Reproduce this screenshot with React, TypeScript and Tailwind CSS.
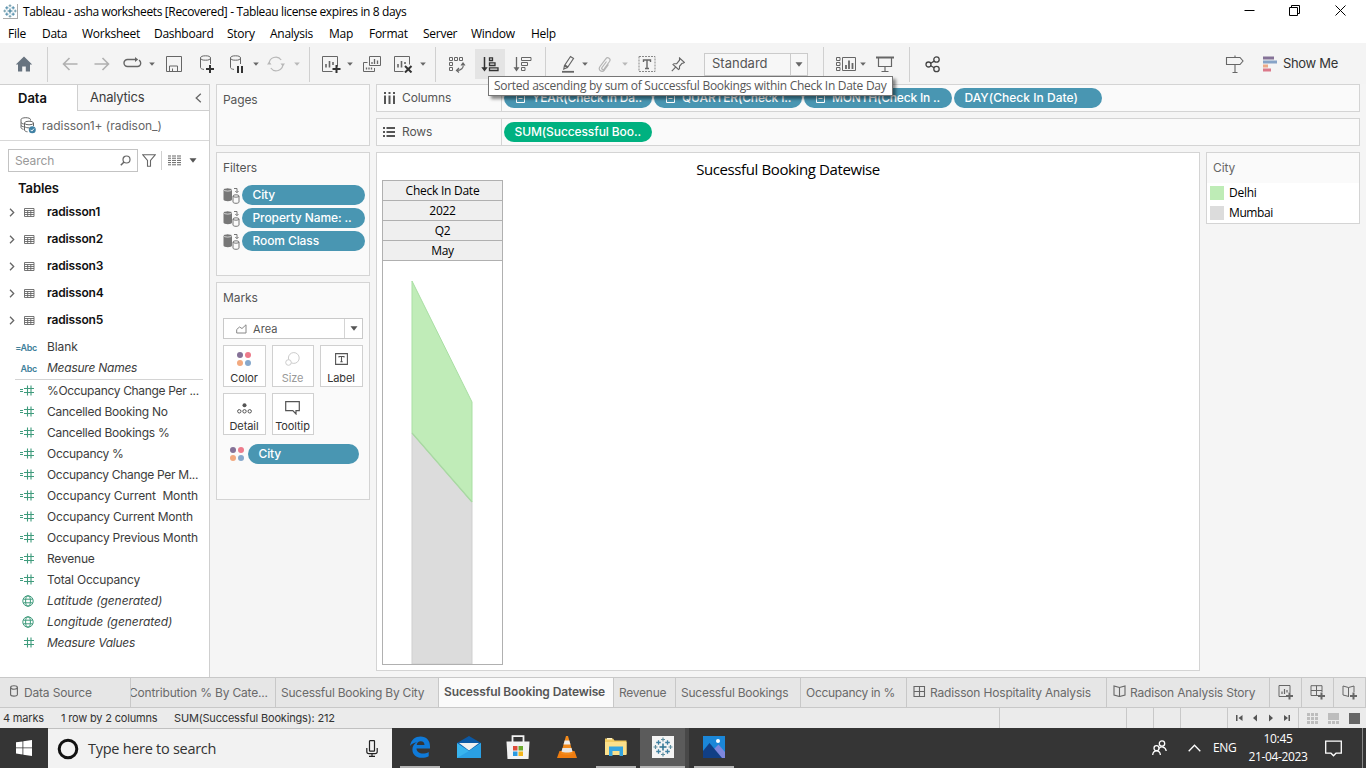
import React from "react";

const ui = "font-['Inter','Noto_Sans',sans-serif]";
const win = "font-['Open_Sans','Noto_Sans',sans-serif]";

type P = { children?: React.ReactNode; className?: string };

function Svg({ w, h, children, className = "", stroke = "#666", sw = 1 }: P & { w: number; h: number; stroke?: string; sw?: number }) {
  return (
    <svg width={w} height={h} viewBox={`0 0 ${w} ${h}`} fill="none" stroke={stroke} strokeWidth={sw} className={`block shrink-0 ${className}`}>
      {children}
    </svg>
  );
}

function Slot({ className = "", children }: P) {
  return <div className={`flex shrink-0 items-center justify-center ${className}`}>{children}</div>;
}

function Caret({ className = "", color = "#666" }: { className?: string; color?: string }) {
  return (
    <Svg w={6} h={4} stroke="none" className={className}>
      <path d="M0.2 0.5h5.6L3 3.7z" fill={color} />
    </Svg>
  );
}

function Sep({ className = "" }: { className?: string }) {
  return <div className={`h-[35px] w-px shrink-0 bg-[#d0d0d0] ${className}`} />;
}

function TableauMark({ size, className = "" }: { size: number; className?: string }) {
  return (
    <svg width={size} height={size} viewBox="0 0 20 20" fill="none" className={`shrink-0 ${className}`}>
      <path d="M10 6.500v7M6.500 10h7" stroke="#2f7391" strokeWidth="1.500" />
      <path d="M5.500 3.200v4.600M3.200 5.500h4.600M14.500 3.200v4.600M12.200 5.500h4.600M5.500 12.200v4.600M3.200 14.500h4.600M14.500 12.200v4.600M12.200 14.500h4.600" stroke="#3f80a1" strokeWidth="1.300" />
      <path d="M10 .5v4M8 2.500h4M10 15.500v4M8 17.500h4M.5 10h4M2.500 8v4M15.500 10h4M17.500 8v4" stroke="#5f8fa0" strokeWidth="1.200" />
    </svg>
  );
}

function TitleBar() {
  return (
    <div className={`flex h-[23px] shrink-0 items-center bg-white ${win}`}>
      <div className="ml-[3px] flex size-[15px] items-center justify-center border-r border-b border-[#aaa]">
        <TableauMark size={14} />
      </div>
      <div className="ml-[5px] whitespace-pre text-[12px] tracking-[-0.37px] text-black">Tableau - asha worksheets [Recovered] - Tableau license expires in 8 days</div>
      <div className="ml-auto flex h-full items-center pb-[2px]">
        <Svg w={11} h={11} stroke="#000" className="mr-[34px]"><path d="M.5 5.5h10" /></Svg>
        <Svg w={11} h={11} stroke="#000" className="mr-[35px]"><path d="M.5 2.5h8v8h-8zM2.500 2.500V.5h8v8H8.500" /></Svg>
        <Svg w={11} h={11} stroke="#000" className="mr-[20px]"><path d="M.5.5l10 10M10.500.5l-10 10" /></Svg>
      </div>
    </div>
  );
}

function MenuBar() {
  const items: [string, string][] = [
    ["File", "w-[34px]"], ["Data", "w-[40px]"], ["Worksheet", "w-[72px]"], ["Dashboard", "w-[73px]"], ["Story", "w-[43px]"],
    ["Analysis", "w-[59px]"], ["Map", "w-[40px]"], ["Format", "w-[54px]"], ["Server", "w-[48px]"], ["Window", "w-[60px]"], ["Help", "w-[40px]"],
  ];
  return (
    <div className={`flex h-[20px] shrink-0 items-center bg-white pl-[8px] pt-[2px] text-[12px] tracking-[-0.27px] text-black ${win}`}>
      {items.map(([t, w]) => <div key={t} className={`shrink-0 leading-[18px] ${w}`}>{t}</div>)}
    </div>
  );
}

function Toolbar() {
  return (
    <div className="flex h-[41px] shrink-0 items-center bg-[#f4f4f4] pt-px">
      <Slot className="w-[47px]">
        <Svg w={18} h={16} stroke="none"><path d="M9 .6L.8 8.600H3V15.500H7.200V10.500H10.800V15.500H15V8.600H17.200z" fill="#67737f" /></Svg>
      </Slot>
      <Sep />
      <Slot className="ml-[7px] w-[30px]"><Svg w={16} h={14} stroke="#b0b0b0" sw={1.6}><path d="M15.500 7H1.500M7.500 1L1.500 7l6 6" /></Svg></Slot>
      <Slot className="ml-[2px] w-[30px]"><Svg w={16} h={14} stroke="#b0b0b0" sw={1.6}><path d="M.5 7H14.500M8.500 1l6 6-6 6" /></Svg></Slot>
      <Slot className="w-[31px] pb-[3px]">
        <Svg w={19} h={11} sw={1.400}><path d="M6.500 2.500H4.500a3.400 3.400 0 000 7h10a3.200 3.200 0 003.200-3.400c0-1.300-.7-2.300-1.700-2.900M6.500 2.500h6.500" /><path d="M12 0L15.200 2.500 12 5z" fill="#666" stroke="none" /></Svg>
      </Slot>
      <Slot className="w-[8px]"><Caret /></Slot>
      <Slot className="ml-[3px] w-[30px]"><Svg w={16} h={16}><path d="M.5.5h15v15H.500zM3.500 15v-5h8v5M6.500 12.500v2.500" /></Svg></Slot>
      <Slot className="ml-[2px] w-[30px]">
        <Svg w={15} h={18}><ellipse cx="6.500" cy="3" rx="5" ry="2.200" /><path d="M1.500 3v9.500c0 1 1.500 1.700 3.500 1.900M11.500 3v6" /><path d="M11 10v8M7 14h8" stroke="#333" strokeWidth="2" /></Svg>
      </Slot>
      <Slot className="w-[30px]">
        <Svg w={15} h={18}><ellipse cx="6.500" cy="3" rx="5" ry="2.200" /><path d="M1.500 3v9.500c0 1 1.500 1.700 3.500 1.900M11.500 3v6" /><path d="M9 11v7M13 11v7" stroke="#333" strokeWidth="2" /></Svg>
      </Slot>
      <Slot className="ml-px w-[8px]"><Caret /></Slot>
      <Slot className="ml-px w-[30px]">
        <Svg w={18} h={16} stroke="#b8b8b8" sw={1.200}><path d="M2.200 8A6.600 6.600 0 0114.200 4M15.800 8A6.600 6.600 0 013.800 12" /><path d="M0 8.500l2.200-3L4.500 8.500zM13.500 7.500l2.300 3L18 7.500z" fill="#b8b8b8" stroke="none" /></Svg>
      </Slot>
      <Slot className="ml-[2px] w-[8px]"><Caret color="#b8b8b8" /></Slot>
      <Sep className="ml-[8px]" />
      <Slot className="ml-[6px] w-[30px]">
        <Svg w={20} h={18}><path d="M11.500 16.500H1.500v-15h15v10" /><path d="M5 12.500V9M8.500 12.500V6M12 10V7" strokeWidth="1.600" /><path d="M15.500 10v8M11.500 14h8" stroke="#333" strokeWidth="2" /></Svg>
      </Slot>
      <Slot className="w-[8px]"><Caret /></Slot>
      <Slot className="ml-[3px] w-[30px]">
        <Svg w={18} h={16}><path d="M6.500.5h11v9h-11zM4.500 6.500h-4v9h11v-3.500" /><path d="M9 8V6M11.500 8V3M14.500 8V4.500M3.500 13.500v-2M6 13.500V11.500M8.500 13.500V11.500" strokeWidth="1.300" /></Svg>
      </Slot>
      <Slot className="w-[32px]">
        <Svg w={20} h={18}><path d="M10.500 16.500H1.500v-15h15v8" /><path d="M5 12.500V9M8.500 12.500V6M12 9V7" strokeWidth="1.600" /><path d="M12 11l6.500 6.500M18.500 11L12 17.500" stroke="#333" strokeWidth="2" /></Svg>
      </Slot>
      <Slot className="w-[8px]"><Caret /></Slot>
      <Sep className="ml-[8px]" />
      <Slot className="ml-[5px] w-[32px]">
        <Svg w={18} h={17}><path d="M1.500 1.500h3v3h-3zM6.500 1.500h3v3h-3zM11.500 1.500h3v3h-3zM1.500 6.500h3v3h-3zM1.500 11.500h3v3h-3z" /><path d="M15 8c1 4-2 6.500-6.500 6.500M13 9.500L15 7l2 2.500M11 12l-2.500 2.500 2.500 2" strokeWidth="1.200" /></Svg>
      </Slot>
      <Slot className="ml-[2px] h-[30px] w-[30px] bg-[#e4e4e4]">
        <Svg w={19} h={15} stroke="#333" sw={1.300}><path d="M3.500 0v11.500" strokeWidth="1.500" /><path d="M.3 10.200h6.400L3.500 14.500z" fill="#333" stroke="none" /><path d="M8.500.8h3v2.700h-3zM8.500 5.800h5.500v2.700H8.500zM8.500 10.800h8.500v2.700H8.500z" /></Svg>
      </Slot>
      <Slot className="ml-[2px] w-[30px]">
        <Svg w={19} h={15} stroke="#666" sw={1}><path d="M3.500 0v12" strokeWidth="1.300" /><path d="M.5 10.200h6L3.500 14.500z" fill="#666" stroke="none" /><path d="M8.500.5h9.500v3H8.500zM8.500 5.500h6v3h-6zM8.500 10.500h3.500v3H8.500z" /></Svg>
      </Slot>
      <Sep className="ml-[8px]" />
      <Slot className="ml-[7px] w-[30px]">
        <Svg w={14} h={18} sw={1.200}><path d="M3.500 10.500L9.500 1.500l3 2-6 9zM3.500 10.500l-.7 3.500 3.700-1.500M4 10l3 2" /><path d="M1 16.800h12" strokeWidth="1.800" /></Svg>
      </Slot>
      <Slot className="ml-[-2px] w-[8px]"><Caret /></Slot>
      <Slot className="w-[30px]">
        <Svg w={15} h={17} stroke="#b4b4b4" sw={1.200}><path d="M9.500 5.500L5 11.500c-1 1.500 1 2.800 2 1.500l5.500-7.500c1.800-2.700-1.800-5.300-3.700-2.700L3 10.500c-2.600 3.700 2 6.500 4.500 3.500l4-5.500" /></Svg>
      </Slot>
      <Slot className="ml-[2px] w-[8px]"><Caret color="#b8b8b8" /></Slot>
      <Slot className="ml-[2px] w-[32px]">
        <Svg w={18} h={16}><path d="M1 .5h16v15H1z" strokeDasharray="2 1" stroke="#888" /><path d="M5.500 6V4h7v2M9 4v8.500M7 12.500h4" strokeWidth="1.400" /></Svg>
      </Slot>
      <Slot className="w-[29px]">
        <Svg w={14} h={15} sw={1.100}><path d="M8.500 1l5 4.500-1.500.8-1 0-2.500 3 0 2.500-1 .7L2 7.500l1-.8 2.700 0L8.500 3.200z" /><path d="M4.800 9.800L.8 14.200" /></Svg>
      </Slot>
      <div className={`ml-[12px] flex h-[23px] w-[104px] shrink-0 items-center border border-[#cbcbcb] bg-[#f7f7f7] text-[13px] text-[#555] ${ui}`}>
        <div className="w-[85px] pl-[7px]">Standard</div>
        <div className="flex h-full w-[17px] items-center justify-center border-l border-[#cbcbcb]">
          <Svg w={8} h={5} stroke="none"><path d="M.5.3h7L4 4.700z" fill="#666" /></Svg>
        </div>
      </div>
      <Sep className="ml-[15px]" />
      <Slot className="ml-[6px] w-[31px]">
        <Svg w={20} h={15}><path d="M.5.5h3.500v3H.500zM.5 5.500h3.500v3H.500zM.5 10.500h3.500v3H.500zM6.500.5h13v13h-13z" /><path d="M10 12V8M13 12V3.500M16.500 12V6" strokeWidth="1.800" /></Svg>
      </Slot>
      <Slot className="ml-[-2px] w-[8px]"><Caret /></Slot>
      <Slot className="ml-[2px] w-[32px]"><Svg w={18} h={17}><path d="M0 1.500h18" strokeWidth="2" /><path d="M2.500 2v8.500h13V2M9 10.500v5M5.500 15.500h7" strokeWidth="1.200" /></Svg></Slot>
      <Sep className="ml-[8px]" />
      <Slot className="ml-[7px] w-[31px]">
        <Svg w={16} h={17} stroke="#444" sw={1.300}><circle cx="3.500" cy="8.500" r="2.500" /><circle cx="11.500" cy="3.500" r="2.700" /><circle cx="11.500" cy="13" r="2.700" /><path d="M5.700 7.300l3.500-2.200M5.700 9.800l3.500 2" /></Svg>
      </Slot>
      <div className={`ml-auto flex items-center pr-[28px] text-[13px] text-[#333] ${ui}`}>
        <Svg w={20} h={18} className="mr-[18px]" sw={1.100}><path d="M1.500 2.500h13.500l3 3.500-3 3.500H1.500zM10 .5v2M10 9.500v8M7.500 17.500h5" /></Svg>
        <Svg w={14} h={16} stroke="none" className="mr-[6px]"><path d="M0 .5h11v3H0z" fill="#857297" /><path d="M0 4.500h14v3H0z" fill="#86a3c7" /><path d="M0 8.500h5v3H0z" fill="#ecaa89" /><path d="M0 12.500h8v3H0z" fill="#dc798a" /></Svg>
        <span className="tracking-[-0.3px]">Show Me</span>
      </div>
    </div>
  );
}

function GridIcon() {
  return (
    <Svg w={11} h={9} className="ml-[9px]"><path d="M.5.500h9.500v8H.500zM.5 2.500h9.500M.5 4.500h9.500M.5 6.500h9.500M3.700 2.500v6M6.800 2.500v6" strokeWidth=".9" /></Svg>
  );
}

function NumIcon({ calc }: { calc?: boolean }) {
  return (
    <Svg w={16} h={11} stroke="#3f9b7c" className="ml-[19px]">
      {calc && <path d="M1 4.500h3M1 6.500h3" />}
      <path d="M5 3.500h10M5 7.500h10M8.500.500v10M12 .5v10" strokeWidth="1.100" />
    </Svg>
  );
}

function GlobeIcon() {
  return (
    <Svg w={12} h={12} stroke="#3f9b7c" className="ml-[22px] mr-[1px]">
      <circle cx="6" cy="6" r="5.200" /><ellipse cx="6" cy="6" rx="2.400" ry="5.200" /><path d="M1.300 4.200h9.400M1.300 7.800h9.400" />
    </Svg>
  );
}

function DataPane() {
  const fields: [string, string, string][] = [
    ["%Occupancy Change Per ...", "calc", "tracking-[-0.33px]"],
    ["Cancelled Booking No", "calc", "tracking-[-0.25px]"],
    ["Cancelled Bookings %", "calc", "tracking-[-0.26px]"],
    ["Occupancy %", "calc", "tracking-[-0.3px]"],
    ["Occupancy Change Per M...", "calc", "tracking-[-0.32px]"],
    ["Occupancy Current  Month", "calc", "tracking-[-0.12px]"],
    ["Occupancy Current Month", "calc", "tracking-[-0.2px]"],
    ["Occupancy Previous Month", "calc", "tracking-[-0.24px]"],
    ["Revenue", "calc", "tracking-[-0.2px]"],
    ["Total Occupancy", "calc", "tracking-[-0.18px]"],
    ["Latitude (generated)", "geo", "italic tracking-[-0.05px]"],
    ["Longitude (generated)", "geo", "italic tracking-[-0.06px]"],
    ["Measure Values", "num", "italic tracking-[-0.24px]"],
  ];
  return (
    <div className={`flex w-[210px] shrink-0 flex-col border-t border-r border-[#cfcfcf] bg-white text-[12px] text-[#3c3c3c] ${ui}`}>
      <div className="flex h-[26px] shrink-0">
        <div className="w-[77px] pl-[18px] text-[13px] font-semibold leading-[26px] text-[#111]">Data</div>
        <div className="flex flex-1 items-center border-b border-l border-[#cfcfcf] bg-[#f8f8f8] pl-[12px] text-[13px]">
          <span className="tracking-[-0.22px]">Analytics</span>
          <Svg w={7} h={10} className="ml-auto mr-[7px]" sw={1.300}><path d="M5.800.8L1.200 5l4.600 4.200" /></Svg>
        </div>
      </div>
      <div className="flex h-[30px] shrink-0 items-center border-b border-[#d8d8d8] pl-[20px] text-[#666]">
        <Svg w={16} h={17} className="mr-[6px]">
          <path d="M10.500 3.500V2.500c0-1-2-1.800-4.700-1.800S1 1.500 1 2.500v8c0 1 1 1.500 2.500 1.800" /><path d="M1 5.500c.5 1 1.500 1.300 2.800 1.500M1 8.500c.5.8 1.500 1 2.800 1.300" />
          <ellipse cx="9" cy="6" rx="4.500" ry="1.800" /><path d="M4.500 6v7c0 1 1.500 1.700 3 1.800M13.500 6v3M4.500 9.500c1 1 3 1.500 5 1.300" />
          <circle cx="12.300" cy="12.800" r="3.500" fill="#3f81a4" stroke="none" /><path d="M10.600 12.800l1.200 1.300 2.200-2.500" stroke="#fff" />
        </Svg>
        <span className="tracking-[-0.03px]">radisson1+ (radison_)</span>
      </div>
      <div className="mt-[8px] flex h-[23px] shrink-0 items-center pl-[8px]">
        <div className="flex h-[23px] w-[130px] items-center border border-[#c3c3c3] pl-[6px] tracking-[-0.1px] text-[#999]">
          Search
          <Svg w={11} h={11} className="ml-auto mr-[6px]" sw={1.200}><circle cx="6.500" cy="4.500" r="3.500" /><path d="M4 7L.8 10.200" strokeWidth="1.500" /></Svg>
        </div>
        <Svg w={14} h={13} className="ml-[4px]" sw={1.100}><path d="M.8.800h12.400L8.500 6.500v5.700H5.500V6.500z" /></Svg>
        <div className="ml-[5px] h-[19px] w-px bg-[#d0d0d0]" />
        <Svg w={13} h={11} className="ml-[6px]"><path d="M0 1h3M0 3.200h3M0 5.400h3M0 7.600h3M0 9.800h3M4 1h4M4 3.200h4M4 5.400h4M4 7.600h4M4 9.800h4M9 1h4M9 3.200h4M9 5.400h4M9 7.600h4M9 9.800h4" /></Svg>
        <Svg w={8} h={5} stroke="none" className="ml-[8px]"><path d="M.5.200h7L4 4.700z" fill="#555" /></Svg>
      </div>
      <div className="mt-[3px] h-[26px] shrink-0 pl-[18px] text-[13px] font-semibold leading-[26px] tracking-[-0.1px] text-[#111]">Tables</div>
      {[1, 2, 3, 4, 5].map((n) => (
        <div key={n} className="flex h-[27px] shrink-0 items-center pb-[6px] pl-[9px]">
          <Svg w={6} h={9} sw={1.300} className="mt-[2px]"><path d="M1 .8l3.700 3.700L1 8.200" /></Svg>
          <div className="pt-[2px]"><GridIcon /></div>
          <span className="ml-[12px] font-semibold tracking-[-0.15px] text-[#111]">radisson{n}</span>
        </div>
      ))}
      <div className="flex h-[21px] shrink-0 items-center tracking-[-0.1px]">
        <span className="w-[47px] pr-[10px] pt-[2px] text-right text-[9px] font-semibold tracking-[-0.3px] text-[#42819b]">=Abc</span>Blank
      </div>
      <div className="flex h-[21px] shrink-0 items-center">
        <span className="w-[47px] pr-[10px] pt-[2px] text-right text-[9px] font-semibold tracking-[-0.3px] text-[#42819b]">Abc</span>
        <span className="italic tracking-[-0.24px]">Measure Names</span>
      </div>
      <div className="ml-[15px] mr-[6px] mt-px h-px shrink-0 bg-[#d4d4d4]" />
      {fields.map(([t, k, c]) => (
        <div key={t} className="flex h-[21px] shrink-0 items-center">
          {k === "geo" ? <GlobeIcon /> : <NumIcon calc={k === "calc"} />}
          <span className={`ml-[12px] whitespace-pre ${c}`}>{t}</span>
        </div>
      ))}
    </div>
  );
}

function Dots({ className = "" }: { className?: string }) {
  return (
    <Svg w={14} h={14} stroke="none" className={className}>
      <circle cx="3" cy="3" r="3" fill="#857297" /><circle cx="11" cy="3" r="3" fill="#ed7b8b" />
      <circle cx="3" cy="11" r="3" fill="#f2a97f" /><circle cx="11" cy="11" r="3" fill="#86a8cc" />
    </Svg>
  );
}

function Pill({ className = "", children }: P) {
  return <div className={`flex h-[20px] shrink-0 items-center whitespace-nowrap rounded-full pl-[10.5px] text-[12px] font-medium text-white ${className}`}>{children}</div>;
}

function MinusBox() {
  return <Svg w={9} h={9} stroke="#fff" className="ml-[1.5px] mr-[7px]"><path d="M.5.5h8v8h-8zM2.500 4.500h4" /></Svg>;
}

function FilterRow({ label }: { label: string }) {
  return (
    <div className="mb-[3px] flex items-center pl-[6px]">
      <Svg w={17} h={17} className="mr-[2px]" stroke="#777">
        <path d="M.5 3v9.500c0 1 2 1.700 4.300 1.700s4.200-.7 4.200-1.700V3z" fill="#777" stroke="none" /><ellipse cx="4.700" cy="2.500" rx="4.200" ry="1.600" fill="#777" stroke="#fafafa" strokeWidth=".7" />
        <path d="M11 1.500h3v4M12.300 4l1.600 1.700L15.500 4" /><ellipse cx="13" cy="9" rx="3" ry="1.200" /><path d="M10 9v6c0 .8 1.300 1.300 3 1.300s3-.5 3-1.300V9" />
      </Svg>
      <Pill className="w-[123px] bg-[#4996b2]">{label}</Pill>
    </div>
  );
}

function MarkButton({ label, children, className = "text-[#333]" }: P & { label: string }) {
  return (
    <div className={`flex h-[42px] flex-col items-center border border-[#d0d0d0] bg-white pr-px ${className}`}>
      <div className="flex h-[26px] items-center">{children}</div>
      <div className="text-[11px] leading-[13px] tracking-[-0.1px]">{label}</div>
    </div>
  );
}

const card = "border border-[#d4d4d4] bg-[#fafafa]";

function Cards() {
  return (
    <div className={`ml-[6px] flex w-[154px] shrink-0 flex-col text-[12px] tracking-[-0.1px] text-[#555] ${ui}`}>
      <div className={`h-[62px] shrink-0 pl-[6px] pt-[6px] leading-[18px] ${card}`}>Pages</div>
      <div className={`mt-[6px] h-[124px] shrink-0 ${card}`}>
        <div className="mb-[8px] pl-[6px] pt-[6px] leading-[18px]">Filters</div>
        {["City", "Property Name: ..", "Room Class"].map((l) => <FilterRow key={l} label={l} />)}
      </div>
      <div className={`mt-[6px] h-[218px] shrink-0 pl-[6px] ${card}`}>
        <div className="pt-[6px] leading-[18px]">Marks</div>
        <div className="mt-[11px] flex h-[21px] w-[140px] items-center border border-[#c9c9c9] bg-white text-[11px]">
          <Svg w={11} h={10} className="ml-[12px] mr-[6px]" stroke="#888"><path d="M.7 9V5.500L3.500 3 6 4.500 10 .8V9z" /></Svg>
          <span className="pt-px tracking-[0.05px]">Area</span>
          <div className="ml-auto flex h-full w-[18px] items-center justify-center border-l border-[#d4d4d4]">
            <Svg w={8} h={5} stroke="none"><path d="M.5.200h7L4 4.700z" fill="#555" /></Svg>
          </div>
        </div>
        <div className="mt-[6px] grid w-[140px] grid-cols-[43px_42px_43px] gap-[6px]">
          <MarkButton label="Color"><Dots /></MarkButton>
          <MarkButton label="Size" className="text-[#999]"><Svg w={15} h={14} stroke="#ccc"><circle cx="8.800" cy="6" r="5.400" /><circle cx="3.500" cy="10.500" r="2.800" fill="#fff" /></Svg></MarkButton>
          <MarkButton label="Label"><Svg w={13} h={12} stroke="#555" sw={1.100}><path d="M.600.600h11.800v10.800H.600zM4 4.500V3.500h5v1M6.500 3.500v5M5.300 8.700h2.400" /></Svg></MarkButton>
          <MarkButton label="Detail"><Svg w={15} h={11} stroke="#555" className="mt-[3px]"><circle cx="7.500" cy="2.200" r="2" fill="#555" stroke="none" /><circle cx="2.300" cy="8.300" r="1.700" /><circle cx="7.500" cy="8.300" r="1.700" /><circle cx="12.700" cy="8.300" r="1.700" /></Svg></MarkButton>
          <MarkButton label="Tooltip"><Svg w={15} h={14} stroke="#555" sw={1.200} className="mt-[2px]"><path d="M.700.700h13.600v9H11v3.300L7.800 9.700H.700z" /></Svg></MarkButton>
        </div>
        <div className="mt-[9px] flex items-center pl-[7px]">
          <Dots className="mr-[4px]" />
          <Pill className="w-[111px] bg-[#4996b2]">City</Pill>
        </div>
      </div>
    </div>
  );
}

function Shelves() {
  return (
    <div className="flex flex-col gap-[6px]">
      <div className={`flex h-[28px] items-center text-[12px] text-[#555] ${card}`}>
        <div className="flex h-full w-[125px] items-center border-r border-[#d4d4d4] pl-[7px]">
          <Svg w={11} h={12} stroke="#555" sw={2} className="mr-[7px]"><path d="M1 0v2M1 3.500V12M5.500 0v2M5.500 3.500V12M10 0v2M10 3.500V12" /></Svg>
          <span className="tracking-[-0.1px]">Columns</span>
        </div>
        <div className="flex gap-[2px] pl-[2px]">
          <Pill className="w-[148px] bg-[#4996b2] tracking-[-0.15px]"><MinusBox />YEAR(Check In Da..</Pill>
          <Pill className="w-[148px] bg-[#4996b2] tracking-[-0.15px]"><MinusBox />QUARTER(Check I..</Pill>
          <Pill className="w-[148px] bg-[#4996b2] tracking-[-0.2px]"><MinusBox />MONTH(Check In ..</Pill>
          <Pill className="w-[148px] bg-[#4996b2] tracking-[0.02px]">DAY(Check In Date)</Pill>
        </div>
      </div>
      <div className={`flex h-[28px] items-center text-[12px] text-[#555] ${card}`}>
        <div className="flex h-full w-[125px] items-center border-r border-[#d4d4d4] pl-[6px]">
          <Svg w={12} h={10} stroke="#555" sw={2} className="mr-[7px]"><path d="M0 1h2M3.500 1H12M0 5h2M3.500 5H12M0 9h2M3.500 9H12" /></Svg>
          <span className="tracking-[-0.1px]">Rows</span>
        </div>
        <div className="pl-[2px]"><Pill className="w-[148px] bg-[#00b180] tracking-[-0.1px]">SUM(Successful Boo..</Pill></div>
      </div>
    </div>
  );
}

function Worksheet() {
  return (
    <div className={`flex w-[824px] flex-col border border-[#d4d4d4] bg-white text-black ${win}`}>
      <div className="h-[27px] shrink-0 text-center text-[15px] leading-[32px] tracking-[-0.39px]">Sucessful Booking Datewise</div>
      <div className="ml-[5px] h-[485px] w-[121px] border border-[#b0b0b0]">
        {["Check In Date", "2022", "Q2", "May"].map((t) => (
          <div key={t} className="h-[20px] border-b border-[#b0b0b0] bg-[#efefef] text-center text-[12px] leading-[19px] tracking-[-0.25px]">{t}</div>
        ))}
        <svg width="119" height="403" viewBox="0 0 119 403" className="block">
          <path d="M29 172L89 241V403H29z" fill="#dcdcdc" stroke="#cfcfcf" />
          <path d="M29 20L89 141V241L29 172z" fill="#c0ecb8" stroke="#a9dfa3" />
          <path d="M29 172L89 241" stroke="#a9d8a3" strokeWidth="1.2" />
        </svg>
      </div>
    </div>
  );
}

function Legend() {
  return (
    <div className={`h-[72px] w-[154px] border border-[#d4d4d4] bg-white ${ui}`}>
      <div className="h-[30px] bg-[#fafafa] pl-[6px] text-[12px] leading-[30px] tracking-[-0.1px] text-[#666]">City</div>
      <div className={`flex h-[20px] items-center pl-[3px] text-[12px] tracking-[-0.25px] text-black ${win}`}><div className="mr-[5px] size-[14px] bg-[#beecb6]" />Delhi</div>
      <div className={`flex h-[20px] items-center pl-[3px] text-[12px] tracking-[-0.4px] text-black ${win}`}><div className="mr-[5px] size-[14px] bg-[#dcdcdc]" />Mumbai</div>
    </div>
  );
}

const windowPath = "M1 .500h10.500v10H1zM6.500.500v10M1 5.500h10.500";
const bookPath = "M6.500 2.500L1 1v9l5.500 1.500L12 10V1zM6.500 2.500v9";

function SheetTabs() {
  const tab = "flex h-full shrink-0 items-center overflow-hidden whitespace-nowrap border-r border-[#c8c8c8]";
  return (
    <div className={`flex h-[31px] shrink-0 border-t border-b border-[#c8c8c8] bg-[#e6e6e6] text-[12px] text-[#6a6a6a] ${ui}`}>
      <div className={`${tab} w-[131px] pl-[10px]`}>
        <Svg w={8} h={12} className="mr-[6px] mb-[3px]" sw={1.100}><path d="M.6 2.500v7c0 2.200 6.800 2.200 6.800 0v-7" /><ellipse cx="4" cy="2.500" rx="3.400" ry="1.700" /></Svg>
        <span className="tracking-[-0.17px]">Data Source</span>
      </div>
      <div className={`${tab} w-[145px]`}><span className="ml-[-2px] tracking-[-0.18px]">Contribution % By Cate...</span></div>
      <div className={`${tab} w-[163px] pl-[5px]`}><span className="tracking-[-0.24px]">Sucessful Booking By City</span></div>
      <div className={`${tab} w-[175px] bg-[#fafafa] pb-[2px] pl-[5px] font-semibold text-[#555]`}><span className="tracking-[-0.13px]">Sucessful Booking Datewise</span></div>
      <div className={`${tab} w-[62px] pl-[5px]`}><span className="tracking-[-0.25px]">Revenue</span></div>
      <div className={`${tab} w-[125px] pl-[5px]`}><span className="tracking-[-0.24px]">Sucessful Bookings</span></div>
      <div className={`${tab} w-[106px] pl-[5px]`}><span className="tracking-[-0.3px]">Occupancy in %</span></div>
      <div className={`${tab} w-[200px] pl-[6px]`}>
        <Svg w={13} h={12} className="mb-[2px] mr-[4px]" sw={1.100}><path d={windowPath} /></Svg><span className="tracking-[-0.17px]">Radisson Hospitality Analysis</span>
      </div>
      <div className={`${tab} w-[163px] pl-[6px]`}>
        <Svg w={13} h={12} className="mb-[3px] mr-[4px]" sw={1.100}><path d={bookPath} /></Svg><span className="tracking-[-0.19px]">Radison Analysis Story</span>
      </div>
      <div className={`${tab} w-[32px] justify-center`}>
        <Svg w={16} h={15}><path d="M8 11.500H1V.500h11v7" /><path d="M4 9V6.500M6.500 9V4M9 7.500V5" strokeWidth="1.200" /><path d="M11.500 7.500v7M8 11h7" strokeWidth="2" /></Svg>
      </div>
      <div className={`${tab} w-[32px] justify-center`}>
        <Svg w={16} h={15}><path d="M8 10.500H1V.700h11v6.300M6.500.700v9.800M1 5.500h11" /><path d="M11.500 7.500v7M8 11h7" strokeWidth="2" /></Svg>
      </div>
      <div className={`${tab} w-[32px] justify-center`}>
        <Svg w={16} h={15}><path d="M7 11.500L1 10V1l5.500 1.500L12 1v6M6.500 2.500v9" /><path d="M11.500 7.500v7M8 11h7" strokeWidth="2" /></Svg>
      </div>
    </div>
  );
}

function StatusBar() {
  const sep = "border-l border-[#c8c8c8] h-full shrink-0";
  return (
    <div className={`flex h-[20px] shrink-0 items-center bg-[#ebebeb] text-[11px] tracking-[-0.18px] text-[#333] ${ui}`}>
      <span className="w-[58px] shrink-0 pl-[3px]">4 marks</span>
      <span className="w-[116px] shrink-0 pl-[3px]">1 row by 2 columns</span>
      <span className="tracking-[-0.18px]">SUM(Successful Bookings): 212</span>
      <div className={`ml-auto w-[127px] ${sep}`} />
      <div className={`w-[27px] ${sep}`} />
      <div className={`w-[27px] ${sep}`} />
      <div className={`w-[47px] ${sep}`} />
      <div className={`flex w-[71px] items-center pl-[8px] ${sep}`}>
        <Svg w={56} h={8} stroke="none">
          <path d="M0 1h1.500v6H0zM6.500 1v6L2.500 4zM21 .500v7L17 4zM33 .500v7L37 4zM48 1v6l4-3zM52.500 1H54v6h-1.500z" fill="#555" />
        </Svg>
      </div>
      <div className={`flex w-[68px] items-center gap-[10px] pl-[8px] ${sep}`}>
        <Svg w={11} h={11} stroke="none"><path d="M0 0h3v3H0zM4 0h3v3H4zM8 0h3v3H8zM0 4h3v3H0zM4 4h3v3H4zM8 4h3v3H8zM0 8h3v3H0zM4 8h3v3H4zM8 8h3v3H8z" fill="#bdbdbd" /></Svg>
        <Svg w={11} h={11} stroke="none"><path d="M0 0h11v7H0zM0 8h3v3H0zM4 8h3v3H4zM8 8h3v3H8z" fill="#bdbdbd" /></Svg>
        <Svg w={11} h={11} stroke="none"><path d="M0 0h11v11H0z" fill="#666" /></Svg>
      </div>
    </div>
  );
}

function TaskButton({ children, open, active }: P & { open?: boolean; active?: boolean }) {
  return (
    <div className={`flex h-full w-[49px] shrink-0 flex-col items-center ${active ? "border-r-[4px] border-[#484848] bg-[#5b5b5b]" : ""}`}>
      <div className="flex h-[38px] items-center">{children}</div>
      {open && <div className={`h-[2px] bg-[#b5b5b5] ${active ? "w-full" : "w-[40px]"}`} />}
    </div>
  );
}

function Taskbar() {
  return (
    <div className={`flex h-[40px] shrink-0 bg-[#353535] text-white ${win}`}>
      <Slot className="w-[48px]"><Svg w={16} h={16} stroke="none"><path d="M0 2.300l6.500-.9v6.100H0zM7.300 1.300L16 0v7.500H7.300zM0 8.300h6.500v6.200L0 13.600zM7.300 8.300H16V16l-8.700-1.300z" fill="#fff" /></Svg></Slot>
      <div className="flex w-[344px] shrink-0 items-center border-t border-[#c0c0c0] bg-[#f2f2f2] pl-[9px] text-[#333]">
        <Svg w={22} h={22} stroke="#111" sw={3}><circle cx="11" cy="11" r="8.800" /></Svg>
        <span className="ml-[9px] text-[14.5px] tracking-[-0.28px]">Type here to search</span>
        <Svg w={12} h={17} stroke="#222" sw={1.200} className="ml-auto mr-[14px]"><rect x="3.500" y=".7" width="5" height="10.500" rx=".5" /><path d="M.8 8v3.500c0 1.500.8 2.200 2 2.200h6.400c1.200 0 2-.7 2-2.200V8M6 13.700V16.300M3 16.300h6" /></Svg>
      </div>
      <div className="ml-[3px] flex">
        <TaskButton open>
          <svg width="22" height="22" viewBox="0 0 22 22"><path d="M1 10C2 3.500 6.500.500 11.500.500c6 0 9.500 4 9.500 9.700v2.300H7.500c.2 3.500 3 5 6.300 5 2.200 0 4.200-.6 5.900-1.600v4.400c-2 1-4.300 1.500-6.900 1.500C7 21.800 3.400 18.500 3.400 13.500c0-3 1.500-5.700 4.600-7.200-3 .3-5.500 1.500-7 3.700zM7.700 9h7.800c0-2.400-1.300-3.800-3.700-3.800S8 6.700 7.700 9z" fill="#0f7ad8" /></svg>
        </TaskButton>
        <TaskButton>
          <svg width="24" height="22" viewBox="0 0 24 22"><path d="M0 7L12 0l12 7v3H0z" fill="#0b58a4" /><path d="M0 7h24v15H0z" fill="#0d62b0" /><path d="M2 7h20L12 14.500z" fill="#f0f0f0" /><path d="M0 7l12 8 12-8v15H0z" fill="#38b4ee" /><path d="M0 22L24 8v14z" fill="#1f8fdc" opacity=".55" /></svg>
        </TaskButton>
        <TaskButton>
          <svg width="24" height="24" viewBox="0 0 24 24"><path d="M6.500 7V1.200h11V7" fill="none" stroke="#f3f3f3" strokeWidth="1.800" /><path d="M.5 6.500h23L22.500 24h-21z" fill="#f3f3f3" /><path d="M7 11h4.500v4.500H7z" fill="#dd4b39" /><path d="M12.500 11H17v4.500h-4.500z" fill="#6cab2e" /><path d="M7 16.500h4.500V21H7z" fill="#2b9ae0" /><path d="M12.500 16.500H17V21h-4.500z" fill="#f3b51b" /></svg>
        </TaskButton>
        <TaskButton>
          <svg width="20" height="22" viewBox="0 0 20 22"><path d="M2.500 15h15l2.500 7H0z" fill="#ef7d10" /><path d="M9 0h2l5 17.500c-2 1.800-10 1.800-12 0z" fill="#f28a1c" /><path d="M7.700 4.500h4.600l1.200 4H6.500z" fill="#eee" /><path d="M5.500 12h9l1 3.500c-2 1.300-9 1.300-11 0z" fill="#e6e6e6" /></svg>
        </TaskButton>
        <TaskButton open>
          <svg width="22" height="20" viewBox="0 0 22 20"><path d="M0 1.500h8l1.500 2H21.500V17H0z" fill="#f2cc62" /><path d="M0 5h21.500v13H0z" fill="#fbe08b" /><path d="M4 9.500h14V19h-3.500v-5h-7v5H4z" fill="#35a5e0" /><path d="M2 1h5v1.500H2z" fill="#fff3c9" /></svg>
        </TaskButton>
        <TaskButton open active>
          <div className="flex size-[22px] items-center justify-center bg-[#f4f4f4]"><TableauMark size={20} /></div>
        </TaskButton>
        <TaskButton open>
          <svg width="22" height="22" viewBox="0 0 22 22"><path d="M0 0h22v22H0z" fill="#1b87d8" /><path d="M11 13l4.500-4.500L22 16v6H11z" fill="#7d86dc" /><path d="M0 15l6.500-8L19 22H0z" fill="#113f85" /><circle cx="15" cy="5" r="2" fill="#fff" /></svg>
        </TaskButton>
      </div>
      <div className="ml-auto flex items-center">
        <Svg w={15} h={16} stroke="#fff" sw={1.300} className="mr-[21px]"><circle cx="10" cy="3.500" r="2.700" /><path d="M7 8.500c1.500-2.200 6.500-2.500 7.200 2.500" /><circle cx="4.500" cy="8.200" r="2.500" /><path d="M.7 15c.3-5.500 7.300-5.500 7.700 0" /></Svg>
        <Svg w={13} h={8} stroke="#fff" sw={1.300} className="mr-[12px]"><path d="M.7 7.200L6.500 1.200l5.800 6" /></Svg>
        <span className="w-[35px] text-[12px] tracking-[-0.3px]">ENG</span>
        <div className="w-[60px] text-center text-[12px] leading-[18px] tracking-[-0.35px]"><div>10:45</div><div>21-04-2023</div></div>
        <Svg w={17} h={17} stroke="#fff" sw={1.300} className="ml-[17px]"><path d="M.7 1.200h15.600v12h-5.300l-2.500 2.600-2.500-2.600H.700z" /></Svg>
        <div className="ml-[20px] h-[40px] w-[4px] border-l border-[#888]" />
      </div>
    </div>
  );
}

export default function App() {
  return (
    <div className="relative flex h-[768px] w-[1366px] flex-col overflow-hidden bg-[#f5f5f5]">
      <TitleBar />
      <MenuBar />
      <Toolbar />
      <div className="flex min-h-0 flex-1">
        <DataPane />
        <Cards />
        <div className={`ml-[6px] flex w-[984px] shrink-0 flex-col gap-[6px] pb-[6px] ${ui}`}>
          <Shelves />
          <div className="flex min-h-0 flex-1 items-stretch gap-[6px]">
            <Worksheet />
            <Legend />
          </div>
        </div>
      </div>
      <SheetTabs />
      <StatusBar />
      <Taskbar />
      <div className={`absolute left-[488px] top-[76px] flex h-[20px] w-[405px] items-center whitespace-nowrap border border-[#767676] bg-white pl-[5px] text-[12px] tracking-[-0.28px] text-[#575757] shadow-[3px_3px_3px_rgba(0,0,0,0.45)] ${win}`}>
        Sorted ascending by sum of Successful Bookings within Check In Date Day
      </div>
    </div>
  );
}
